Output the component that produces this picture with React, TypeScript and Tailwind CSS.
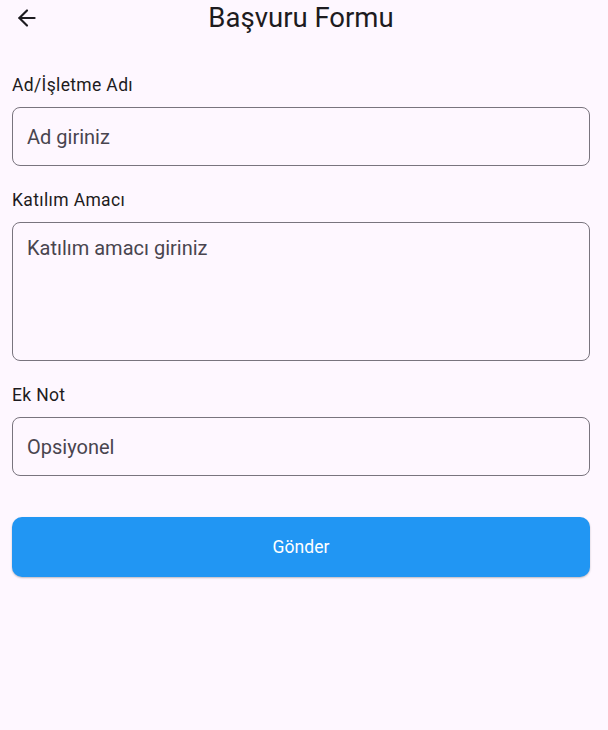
import { ArrowLeft } from 'lucide-react'

const font = { fontFamily: 'Roboto, sans-serif' }

function Field({ label, placeholder, tall }: { label: string; placeholder: string; tall?: boolean }) {
  return (
    <div className="flex flex-col">
      <label className="h-[22px] text-[17.5px] leading-[24px] tracking-[0.35px] text-[#1d1b20]">{label}</label>
      <div
        className={
          'mt-3 rounded-[8px] border border-[#79747e] px-[14px] text-[20px] text-[#49454f] ' +
          (tall ? 'h-[139px] pt-[10px]' : 'flex h-[59px] items-center')
        }
      >
        {placeholder}
      </div>
    </div>
  )
}

export default function App() {
  return (
    <div className="min-h-[730px] w-[608px] bg-[#fef7ff] pl-3 pr-[18px]" style={font}>
      <header className="relative flex h-[35px] items-center justify-center">
        <button className="absolute left-[2px] top-[5px] text-[#1d1b20]">
          <ArrowLeft size={26} strokeWidth={2} />
        </button>
        <h1 className="text-[27.5px] leading-none text-[#1d1b20]">Başvuru Formu</h1>
      </header>

      <div className="flex flex-col gap-[22px] pt-[38px]">
        <Field label="Ad/İşletme Adı" placeholder="Ad giriniz" />
        <Field label="Katılım Amacı" placeholder="Katılım amacı giriniz" tall />
        <Field label="Ek Not" placeholder="Opsiyonel" />
      </div>

      <div className="pt-[41px]">
        <button className="h-[60px] w-full rounded-[10px] bg-[#2196f3] text-[17.5px] tracking-[0.1px] text-white shadow-[0_1px_2px_rgba(0,0,0,0.25)]">
          Gönder
        </button>
      </div>
    </div>
  )
}
